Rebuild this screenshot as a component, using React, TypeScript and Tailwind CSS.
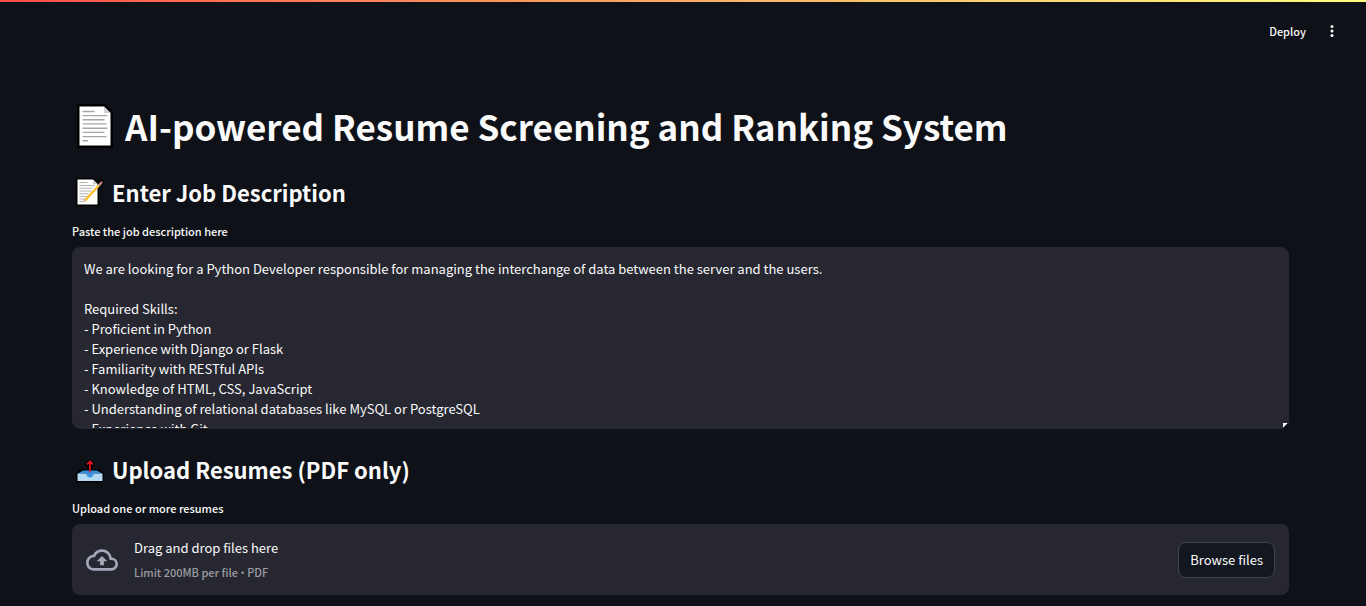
import { useState } from "react";

const initialDescription = `We are looking for a Python Developer responsible for managing the interchange of data between the server and the users.

Required Skills:
- Proficient in Python
- Experience with Django or Flask
- Familiarity with RESTful APIs
- Knowledge of HTML, CSS, JavaScript
- Understanding of relational databases like MySQL or PostgreSQL
- Experience with Git`;

function PageIcon() {
  return (
    <svg aria-hidden="true" viewBox="0 0 36 44" className="h-11 w-9 shrink-0">
      <path d="M0 0h28l8 8v36H0z" fill="#000" />
      <path d="M2.5 2.5H27l6.500 6.500V41.500h-31z" fill="#fff" />
      <path d="M27 2.500V9h6.500z" fill="#d2d2d2" />
      <path
        d="M5.500 7.500h12M5.500 11.600h25M5.500 15.700h22M5.500 19.900h24M5.500 24.200h25M5.500 28.400h22M5.500 32.600h24M5.500 36.700h5.500"
        stroke="#a6a6a6"
        strokeWidth="1.400"
      />
    </svg>
  );
}

function MemoIcon() {
  return (
    <svg aria-hidden="true" viewBox="0 0 28 28" className="size-7 shrink-0">
      <path d="M0 0h18l4 4 2-2 3 0 1 3-5 6v17H0z" fill="#000" />
      <path d="M1.500 1.500H17l4.500 4.500v20.500h-20z" fill="#fff" />
      <path d="M17 1.500V6h4.500z" fill="#cfcfcf" />
      <path
        d="M3.500 4.500h8M3.500 7.500h15.500M3.500 10.200h13M3.500 13h12M3.500 15.700h9M3.500 18.400h8M3.500 21h6M3.500 23.500h4"
        stroke="#b3b3b3"
        strokeWidth="1"
      />
      <path d="M7.300 24l1-3 2 2z" fill="#d9a98a" />
      <path d="M9.200 22.200L23.300 7" stroke="#fcc037" strokeWidth="2.500" />
      <path d="M22.800 7.500l1.800-2" stroke="#a5a5a5" strokeWidth="2.600" />
      <path d="M24.500 5.600l1-1.100" stroke="#c9777a" strokeWidth="2.400" strokeLinecap="round" />
    </svg>
  );
}

function OutboxIcon() {
  return (
    <svg aria-hidden="true" viewBox="0 -1 28 28" className="size-7 shrink-0">
      <path d="M0 17l5-4h6v-3H9V8l5-5 5 5v2h-2v3h6l5 4v8l-1.500 1.500h-25L0 25z" fill="#000" />
      <path d="M2 17.500l5-3h14l5 3z" fill="#2f8ede" />
      <path d="M1.500 17.500h8.500c1 0 1.500 3.500 4 3.500s3-3.500 4-3.500h8.500V25h-25z" fill="#b3daf2" />
      <path d="M9.500 16.500h9c-1 .5-1 5-4.500 5s-3.500-4.500-4.500-5z" fill="#3994e4" />
      <path d="M14 16.500V6M11 8.500L14 5.500l3 3" fill="none" stroke="#ea1327" strokeWidth="1.600" />
    </svg>
  );
}

export default function App() {
  const [description, setDescription] = useState(initialDescription);

  return (
    <div className="min-h-screen bg-[#0e1117] font-['Noto_Sans_CJK_SC','Source_Sans_Pro',sans-serif] text-[#fafafa]">
      <div className="h-0.5 bg-linear-to-r from-[#ff4b4b] to-[#fffd80]" />
      <header className="flex h-[58px] items-center justify-end gap-4 pr-6">
        <button type="button" className="text-[11px] leading-5 font-medium">
          Deploy
        </button>
        <button type="button" aria-label="Main menu" className="grid size-5 place-items-center">
          <svg aria-hidden="true" viewBox="0 0 24 24" className="size-[18px]" fill="currentColor">
            <circle cx="12" cy="6" r="2" />
            <circle cx="12" cy="12" r="2" />
            <circle cx="12" cy="18" r="2" />
          </svg>
        </button>
      </header>

      <main className="pt-10 pr-[77px] pb-2 pl-[72px]">
        <h1 className="flex h-13 items-center gap-3 pl-[5px] text-[35px] leading-[52px] font-bold">
          <PageIcon />
          AI-powered Resume Screening and Ranking System
        </h1>

        <h2 className="mt-6 flex h-8 items-center gap-2 pl-1 text-[22px] leading-8 font-semibold">
          <MemoIcon />
          Enter Job Description
        </h2>
        <label htmlFor="job-description" className="mt-[13px] block text-[11px] leading-5 font-medium">
          Paste the job description here
        </label>
        <div className="relative mt-1.5">
          <textarea
            id="job-description"
            value={description}
            onChange={(event) => setDescription(event.target.value)}
            className="block h-[182px] w-full resize-none overflow-hidden rounded-lg border border-[#262730] bg-[#262730] px-[11px] py-[11px] text-[13px] leading-5 outline-none"
          />
          <svg aria-hidden="true" viewBox="0 0 5 5" className="pointer-events-none absolute right-px bottom-px size-[5px]">
            <path d="M0 0h5L0 5z" fill="#fafafa" />
            <path d="M5 0v5H0z" fill="#0e1117" />
          </svg>
        </div>

        <h2 className="mt-6 flex h-8 items-center gap-2 pl-1 text-[22px] leading-8 font-semibold">
          <OutboxIcon />
          Upload Resumes (PDF only)
        </h2>
        <p id="upload-label" className="mt-[13px] text-[11px] leading-5 font-medium">
          Upload one or more resumes
        </p>
        <section
          aria-labelledby="upload-label"
          className="mt-1.5 flex items-center rounded-lg bg-[#262730] px-[14px] pt-3 pb-[11px]"
        >
          <svg aria-hidden="true" viewBox="0 0 24 24" className="mr-4 size-8 shrink-0" fill="#a3a8b8">
            <path d="M19.350 10.040A7.490 7.490 0 0 0 12 4C9.110 4 6.600 5.640 5.350 8.040A5.994 5.994 0 0 0 0 14c0 3.310 2.690 6 6 6h13c2.760 0 5-2.240 5-5 0-2.640-2.050-4.780-4.650-4.960zM19 18H6c-2.210 0-4-1.790-4-4 0-2.050 1.530-3.760 3.560-3.970l1.070-.11.5-.95A5.469 5.469 0 0 1 12 6c2.620 0 4.880 1.860 5.390 4.430l.3 1.500 1.530.11A2.980 2.980 0 0 1 22 15c0 1.650-1.350 3-3 3zM8 13h2.550v3h2.900v-3H16l-4-4z" />
          </svg>
          <div className="flex-1">
            <p className="text-[13px] leading-6">Drag and drop files here</p>
            <p className="text-[11px] leading-6 font-medium text-[#9c9da3]">
              Limit 200MB per file <span className="font-['Open_Sans',sans-serif] leading-none">•</span> PDF
            </p>
          </div>
          <button
            type="button"
            className="h-9 rounded-lg border border-[#41444c] bg-[#131720] px-[11px] text-[13px] leading-5"
          >
            Browse files
          </button>
        </section>
      </main>
    </div>
  );
}
